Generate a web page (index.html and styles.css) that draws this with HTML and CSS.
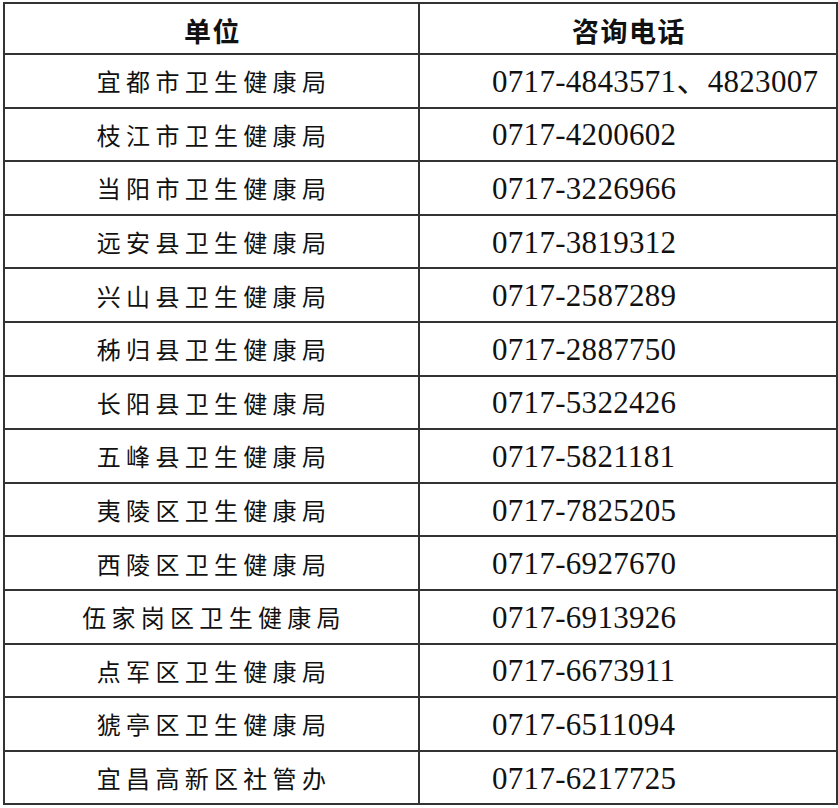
FILE: index.html
```html
<!DOCTYPE html>
<html lang="zh-CN">
<head>
<meta charset="utf-8">
<title>咨询电话</title>
<link rel="stylesheet" href="styles.css">
</head>
<body>
<table class="contacts">
  <colgroup>
    <col class="col-unit">
    <col class="col-phone">
  </colgroup>
  <thead>
    <tr class="head-row">
      <th class="head-cell">单位</th>
      <th class="head-cell">咨询电话</th>
    </tr>
  </thead>
  <tbody>
    <tr class="row"><td class="unit">宜都市卫生健康局</td><td class="phone">0717-4843571、4823007</td></tr>
    <tr class="row"><td class="unit">枝江市卫生健康局</td><td class="phone">0717-4200602</td></tr>
    <tr class="row"><td class="unit">当阳市卫生健康局</td><td class="phone">0717-3226966</td></tr>
    <tr class="row"><td class="unit">远安县卫生健康局</td><td class="phone">0717-3819312</td></tr>
    <tr class="row"><td class="unit">兴山县卫生健康局</td><td class="phone">0717-2587289</td></tr>
    <tr class="row"><td class="unit">秭归县卫生健康局</td><td class="phone">0717-2887750</td></tr>
    <tr class="row"><td class="unit">长阳县卫生健康局</td><td class="phone">0717-5322426</td></tr>
    <tr class="row"><td class="unit">五峰县卫生健康局</td><td class="phone">0717-5821181</td></tr>
    <tr class="row"><td class="unit">夷陵区卫生健康局</td><td class="phone">0717-7825205</td></tr>
    <tr class="row"><td class="unit">西陵区卫生健康局</td><td class="phone">0717-6927670</td></tr>
    <tr class="row"><td class="unit">伍家岗区卫生健康局</td><td class="phone">0717-6913926</td></tr>
    <tr class="row"><td class="unit">点军区卫生健康局</td><td class="phone">0717-6673911</td></tr>
    <tr class="row"><td class="unit">猇亭区卫生健康局</td><td class="phone">0717-6511094</td></tr>
    <tr class="row"><td class="unit">宜昌高新区社管办</td><td class="phone">0717-6217725</td></tr>
  </tbody>
</table>
</body>
</html>
```

FILE: styles.css
```css
html, body {
  margin: 0;
  padding: 0;
  background: #ffffff;
}

body {
  padding: 2px 0 0 3px;
  font-family: "Noto Sans CJK SC", sans-serif;
  color: #111111;
}

.contacts {
  border-collapse: collapse;
  width: 833px;
  table-layout: fixed;
}

.col-unit {
  width: 415px;
}

.col-phone {
  width: 418px;
}

.contacts .head-cell,
.contacts .unit,
.contacts .phone {
  border: 2px solid #333333;
  padding: 0;
  vertical-align: middle;
  line-height: 1;
}

.head-row {
  height: 51px;
}

.contacts .head-cell {
  font-family: "Noto Sans CJK SC", sans-serif;
  font-weight: 700;
  font-size: 27px;
  letter-spacing: 1.5px;
  text-align: center;
  padding: 4px 0 0 2px;
}

.row {
  height: 53.6px;
}

.contacts .unit {
  font-family: "Noto Sans CJK SC", sans-serif;
  font-weight: 400;
  font-size: 24px;
  letter-spacing: 5.3px;
  text-align: center;
  padding: 1px 0 0 5px;
}

.contacts .phone {
  font-family: "Liberation Serif", "Noto Sans CJK SC", serif;
  font-size: 31px;
  letter-spacing: 0.3px;
  text-align: left;
  padding: 1px 0 0 72px;
}
```
